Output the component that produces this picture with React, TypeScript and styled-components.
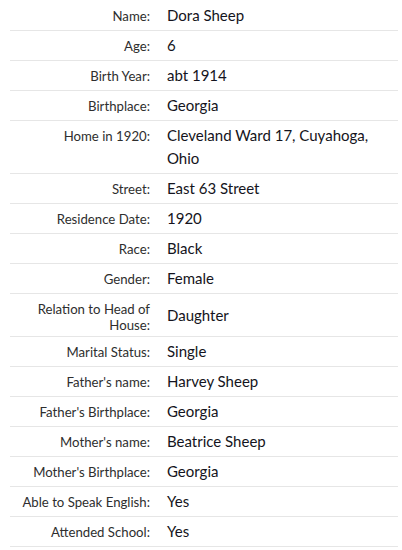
import styled, { createGlobalStyle } from "styled-components";

interface Fact {
    label: string;
    value: string;
}

const facts: Fact[] = [
    { label: "Name:", value: "Dora Sheep" },
    { label: "Age:", value: "6" },
    { label: "Birth Year:", value: "abt 1914" },
    { label: "Birthplace:", value: "Georgia" },
    { label: "Home in 1920:", value: "Cleveland Ward 17, Cuyahoga, Ohio" },
    { label: "Street:", value: "East 63 Street" },
    { label: "Residence Date:", value: "1920" },
    { label: "Race:", value: "Black" },
    { label: "Gender:", value: "Female" },
    { label: "Relation to Head of House:", value: "Daughter" },
    { label: "Marital Status:", value: "Single" },
    { label: "Father's name:", value: "Harvey Sheep" },
    { label: "Father's Birthplace:", value: "Georgia" },
    { label: "Mother's name:", value: "Beatrice Sheep" },
    { label: "Mother's Birthplace:", value: "Georgia" },
    { label: "Able to Speak English:", value: "Yes" },
    { label: "Attended School:", value: "Yes" },
];

const GlobalStyle = createGlobalStyle`
  html, body {
    margin: 0;
    padding: 0;
    background: #ffffff;
  }
  body {
    font-family: Lato, "Liberation Sans", sans-serif;
  }
`;

const Table = styled.div`
  width: 388px;
  margin: 1px 0 0 10px;
  display: flex;
  flex-direction: column;
`;

const Row = styled.div`
  display: flex;
  align-items: flex-start;
  border-bottom: 1px solid #e6e6e6;
  padding: 3px 0;
`;

const Label = styled.div`
  width: 140px;
  flex-shrink: 0;
  text-align: right;
  font-size: 13.2px;
  line-height: 16px;
  padding-top: 4px;
  color: #2e2e2e;
`;

const Value = styled.div`
  flex: 1;
  align-self: center;
  margin-left: 17px;
  padding-right: 20px;
  font-size: 15px;
  line-height: 23px;
  color: #141420;
`;

export default function App() {
    return (
        <>
            <GlobalStyle />
            <Table>
                {facts.map((fact) => (
                    <Row key={fact.label}>
                        <Label>{fact.label}</Label>
                        <Value>{fact.value}</Value>
                    </Row>
                ))}
            </Table>
        </>
    );
}
